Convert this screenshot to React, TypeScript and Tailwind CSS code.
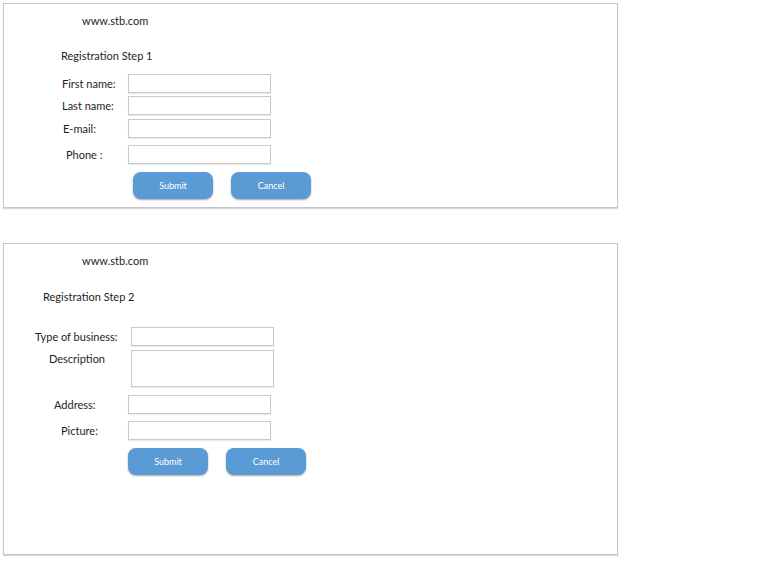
import React from "react";

const font = { fontFamily: '"Lato", "Open Sans", sans-serif' };

function Input({ h = "h-[19px]", w = "w-[143px]" }: { h?: string; w?: string }) {
  return <div className={`${h} ${w} border border-[#c9c9c9] bg-white shadow-[0_1px_1px_rgba(0,0,0,0.08)]`} />;
}

function Btn({ label }: { label: string }) {
  return (
    <div className="flex h-[27px] w-[80px] items-center justify-center rounded-[8px] bg-[#5b9bd5] text-[9px] text-white shadow-[0_1px_2px_rgba(0,0,0,0.35)]">
      {label}
    </div>
  );
}

export default function App() {
  return (
    <div className="min-h-[562px] w-[781px] bg-white text-[11px] leading-[14px] text-[#1e1e1e]" style={font}>
      <div className="pl-[3px] pt-[3px]">
        {/* Panel 1 */}
        <div className="flex h-[205px] w-[615px] flex-col border border-[#c6c6c6] shadow-[0_1px_1px_rgba(0,0,0,0.15)]">
          <div className="ml-[78px] mt-[10px] h-[14px]">www.stb.com</div>
          <div className="ml-[57px] mt-[21px] h-[14px]">Registration Step 1</div>
          <div className="mt-[11px] flex items-center">
            <div className="w-[124px] pl-[58px]">First name:</div>
            <Input />
          </div>
          <div className="mt-[3px] flex items-center">
            <div className="w-[124px] pl-[58px]">Last name:</div>
            <Input />
          </div>
          <div className="mt-[4px] flex items-center">
            <div className="w-[124px] pl-[59px]">E-mail:</div>
            <Input />
          </div>
          <div className="mt-[7px] flex items-center">
            <div className="w-[124px] pl-[62px]">Phone :</div>
            <Input />
          </div>
          <div className="ml-[129px] mt-[8px] flex gap-[18px]">
            <Btn label="Submit" />
            <Btn label="Cancel" />
          </div>
        </div>

        {/* Panel 2 */}
        <div className="mt-[35px] flex h-[312px] w-[615px] flex-col border border-[#c6c6c6] shadow-[0_1px_1px_rgba(0,0,0,0.15)]">
          <div className="ml-[78px] mt-[10px] h-[14px]">www.stb.com</div>
          <div className="ml-[39px] mt-[22px] h-[14px]">Registration Step 2</div>
          <div className="mt-[23px] flex items-center">
            <div className="w-[127px] pl-[31px]">Type of business:</div>
            <Input />
          </div>
          <div className="mt-[4px] flex items-start">
            <div className="w-[127px] pl-[45px] pt-[2px]">Description</div>
            <Input h="h-[37px]" />
          </div>
          <div className="mt-[8px] flex items-center">
            <div className="w-[124px] pl-[50px]">Address:</div>
            <Input />
          </div>
          <div className="mt-[7px] flex items-center">
            <div className="w-[124px] pl-[57px]">Picture:</div>
            <Input />
          </div>
          <div className="ml-[124px] mt-[8px] flex gap-[18px]">
            <Btn label="Submit" />
            <Btn label="Cancel" />
          </div>
        </div>
      </div>
    </div>
  );
}
